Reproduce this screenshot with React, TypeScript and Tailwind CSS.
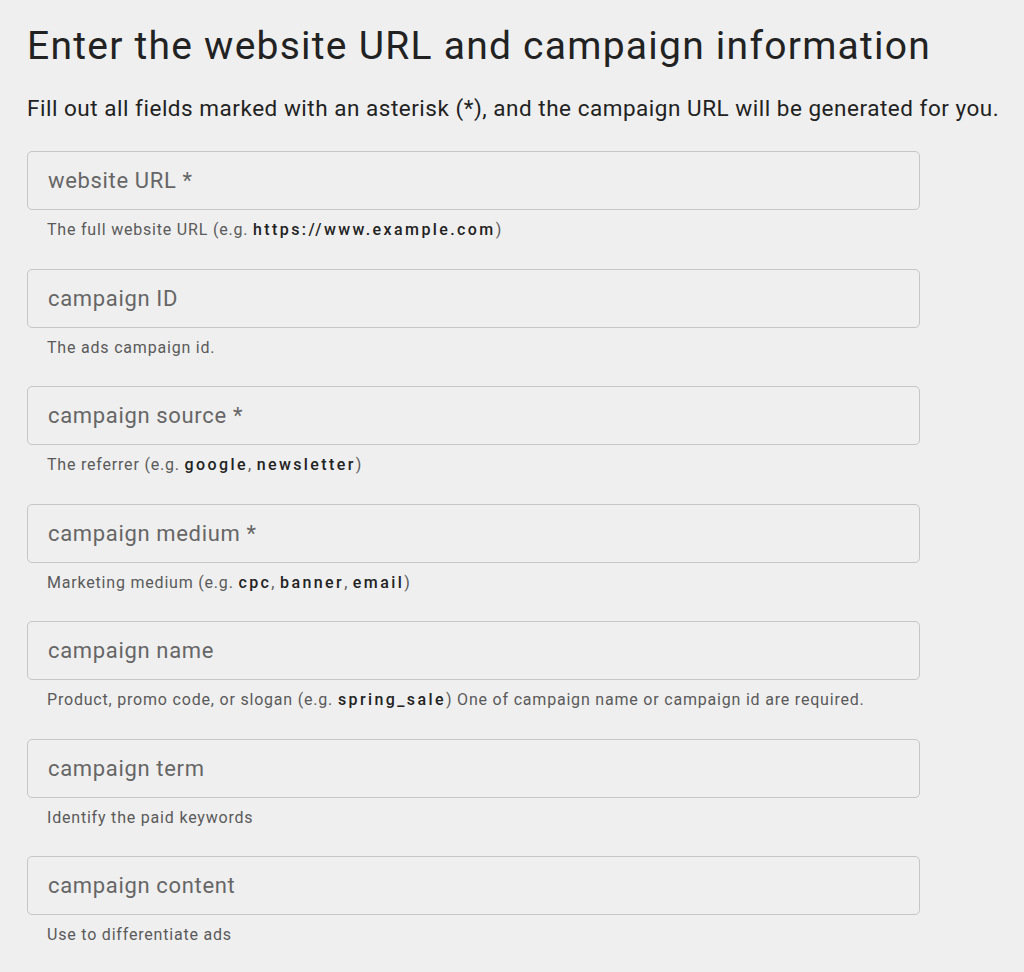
import React from 'react'

type Field = {
  label: string
  help: React.ReactNode
}

const B = ({ children }: { children: React.ReactNode }) => (
  <b className="font-medium tracking-[0.15em] text-[#222]">{children}</b>
)

const fields: Field[] = [
  { label: 'website URL *', help: <>The full website URL (e.g. <B>https://www.example.com</B>)</> },
  { label: 'campaign ID', help: <>The ads campaign id.</> },
  { label: 'campaign source *', help: <>The referrer (e.g. <B>google</B>, <B>newsletter</B>)</> },
  { label: 'campaign medium *', help: <>Marketing medium (e.g. <B>cpc</B>, <B>banner</B>, <B>email</B>)</> },
  {
    label: 'campaign name',
    help: <>Product, promo code, or slogan (e.g. <B>spring_sale</B>) One of campaign name or campaign id are required.</>,
  },
  { label: 'campaign term', help: <>Identify the paid keywords</> },
  { label: 'campaign content', help: <>Use to differentiate ads</> },
]

export default function App() {
  return (
    <div className="min-h-[972px] bg-[#efefef] px-[27px] pt-[20px] font-['Roboto',sans-serif]">
      <h1 className="text-[39px] leading-[52px] text-[#222] tracking-[0.032em]">
        Enter the website URL and campaign information
      </h1>
      <p className="mt-[22px] whitespace-nowrap text-[22.5px] leading-[28px] text-[#222] tracking-[0.023em]">
        Fill out all fields marked with an asterisk (*), and the campaign URL will be generated for you.
      </p>
      <div className="mt-[29px] flex w-[893px] flex-col">
        {fields.map((f) => (
          <div key={f.label} className="h-[117.5px]">
            <div className="flex h-[59px] items-center rounded-[5px] border border-[#c6c6c6] px-[20px]">
              <span className="text-[22px] tracking-[0.03em] text-[#666]">{f.label}</span>
            </div>
            <p className="mt-[9px] pl-[20px] text-[16px] leading-[22px] tracking-[0.05em] text-[#5a5a5a]">{f.help}</p>
          </div>
        ))}
      </div>
    </div>
  )
}
